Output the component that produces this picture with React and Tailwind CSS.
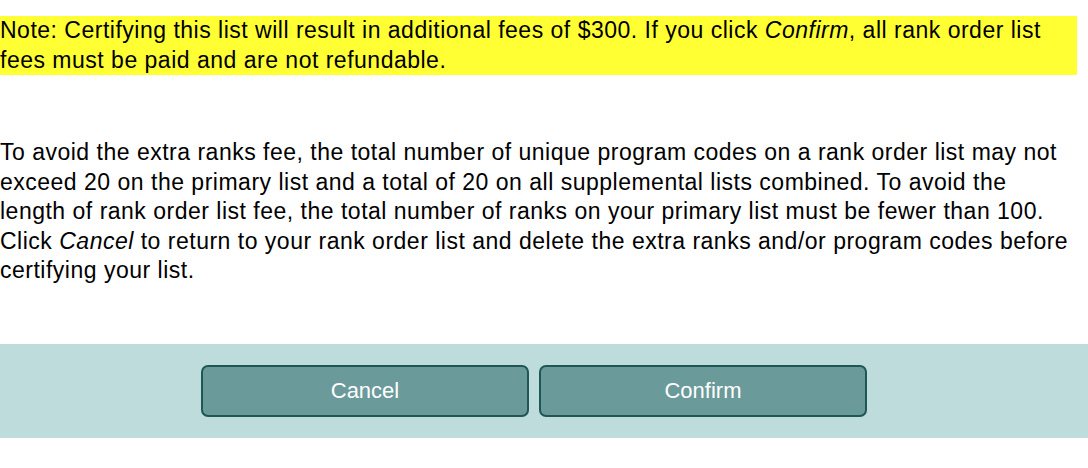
import React from 'react';

export default function App() {
    return (
        <div className="w-[1088px] h-[468px] bg-white text-black font-['Liberation_Sans',Arial,sans-serif] text-[23px] tracking-[0.5px] leading-[29.5px] overflow-hidden">
            <div className="w-[1077px] pt-4">
                <p className="bg-[#ffff33]">
                    Note: Certifying this list will result in additional fees of $300. If you click <i>Confirm</i>, all rank order list fees must be paid and are not refundable.
                </p>
                <p className="mt-[63px]">
                    To avoid the extra ranks fee, the total number of unique program codes on a rank order list may not exceed 20 on the primary list and a total of 20 on all supplemental lists combined. To avoid the length of rank order list fee, the total number of ranks on your primary list must be fewer than 100. Click <i>Cancel</i> to return to your rank order list and delete the extra ranks and/or program codes before certifying your list.
                </p>
            </div>
            <div className="mt-[58px] h-[94px] bg-[#bedcdc] flex items-center pl-[201px] gap-[10px]">
                <button className="w-[328px] h-[52px] rounded-[7px] border-2 border-[#1f5757] bg-[#6a9a9a] text-white text-[22px] tracking-normal">
                    Cancel
                </button>
                <button className="w-[328px] h-[52px] rounded-[7px] border-2 border-[#1f5757] bg-[#6a9a9a] text-white text-[22px] tracking-normal">
                    Confirm
                </button>
            </div>
        </div>
    );
}
